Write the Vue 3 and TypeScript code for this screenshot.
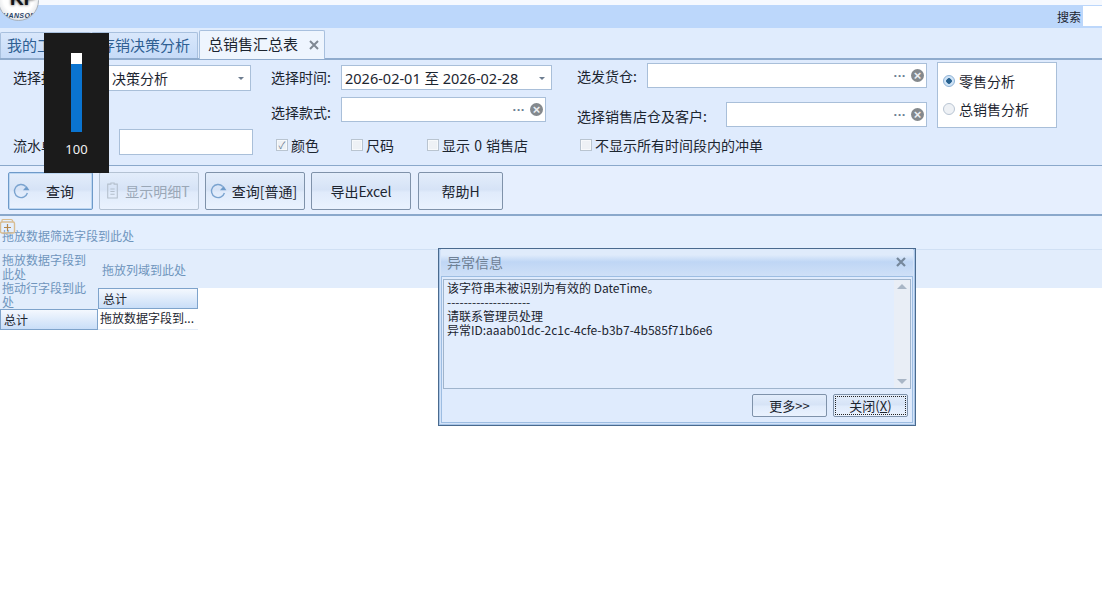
<script setup lang="ts">
const buttons = [
  { label: '查询', icon: 'refresh', cls: 'active wide' },
  { label: '显示明细T', icon: 'doc', cls: 'disabled wide' },
  { label: '查询[普通]', icon: 'refresh', cls: 'mid' },
  { label: '导出Excel', icon: '', cls: 'mid' },
  { label: '帮助H', icon: '', cls: 'small' },
]
</script>

<template>
  <div class="page">
    <div class="topgap"></div>
    <div class="searchbar">
      <span class="search-label">搜索</span>
      <span class="search-input"></span>
    </div>
    <div class="tabs">
      <div class="tab">我的工作台</div>
      <div class="tab second">存销决策分析</div>
      <div class="tab current">
        总销售汇总表
        <svg class="x-ic tab-x" viewBox="0 0 10 10"><path d="M1 1l8 8M9 1l-8 8" /></svg>
      </div>
    </div>

    <div class="form">
      <div class="col col-a">
        <div class="row r1">
          <span class="lbl lbl-a">选择报表:</span>
          <span class="box combo">决策分析<i class="caret"></i></span>
        </div>
        <div class="row r3">
          <span class="lbl lbl-b">流水单号:</span>
          <span class="box plain"></span>
        </div>
      </div>
      <div class="col col-b">
        <div class="row r1">
          <span class="lbl time-lbl">选择时间:</span>
          <span class="box date">2026-02-01 至 2026-02-28<i class="caret"></i></span>
        </div>
        <div class="row r2">
          <span class="lbl time-lbl low">选择款式:</span>
          <span class="box picker style-box"><span class="dots">···</span><i class="clear">×</i></span>
        </div>
        <div class="row r3 checks">
          <label class="chk c1"><i class="cb on">✓</i>颜色</label>
          <label class="chk c2"><i class="cb"></i>尺码</label>
          <label class="chk"><i class="cb"></i>显示 0 销售店</label>
        </div>
      </div>
      <div class="col col-c">
        <div class="row c-r1">
          <span class="lbl wh-lbl">选发货仓:</span>
          <span class="box picker wh-box"><span class="dots">···</span><i class="clear">×</i></span>
        </div>
        <div class="row c-r2">
          <span class="lbl cust-lbl">选择销售店仓及客户:</span>
          <span class="box picker cust-box"><span class="dots">···</span><i class="clear">×</i></span>
        </div>
        <div class="row c-r3">
          <label class="chk"><i class="cb"></i>不显示所有时间段内的冲单</label>
        </div>
      </div>
      <div class="radios">
        <label class="radio"><i class="dot on"></i>零售分析</label>
        <label class="radio"><i class="dot"></i>总销售分析</label>
      </div>
    </div>

    <div class="toolbar">
      <button v-for="b in buttons" :key="b.label" class="tbtn" :class="b.cls">
        <svg v-if="b.icon === 'refresh'" class="ic" viewBox="0 0 18 18" fill="none">
          <path d="M13.8 4.4A6.6 6.6 0 1 0 15.4 11" stroke="#7aa3cf" stroke-width="1.4" />
          <path d="M11 8.2h6.4L14.6 4z" fill="#6f9ccb" />
        </svg>
        <svg v-else-if="b.icon === 'doc'" class="ic doc" viewBox="0 0 14 16" fill="none" stroke="#b4bfcc">
          <path d="M2.5 2h3V1h3v1h3v13h-9z" />
          <path d="M5 6.5h4M5 9h4M5 11.5h4" />
        </svg>
        <span>{{ b.label }}</span>
      </button>
    </div>

    <div class="filter-zone">拖放数据筛选字段到此处</div>
    <div class="header-zone">
      <div class="hz-left">拖放数据字段到此处</div>
      <div class="hz-right">拖放列域到此处</div>
    </div>

    <div class="pivot">
      <div class="p-left">
        <div class="row-drop">拖动行字段到此处</div>
        <div class="cell-head">总计</div>
      </div>
      <div class="p-right">
        <div class="cell-head col-head">总计</div>
        <div class="cell-data">拖放数据字段到...</div>
      </div>
    </div>

    <!-- logo clipped by the top of the window -->
    <div class="logo">
      <span class="kp">KP</span>
      <span class="hanson">HANSON</span>
    </div>
    <svg class="expand" viewBox="0 0 16 17" fill="none">
      <path d="M0.5 5.5q0-1.500 1.500-1.500h11q1.500 0 1.500 1.500v8q0 1.500-1.500 1.500h-11q-1.500 0-1.500-1.500z" stroke="#d9bd92" stroke-width="1.400" />
      <path d="M2 4V2.500q0-1 1-1h8q1 0 1.500 1L13 4" stroke="#d9bd92" stroke-width="1.200" />
      <path d="M4 9.500h7M7.500 6v7" stroke="#b5874c" stroke-width="1.200" />
    </svg>

    <!-- system volume overlay -->
    <div class="volume">
      <div class="track"><div class="fill"></div></div>
      <div class="vol-num">100</div>
    </div>

    <!-- error dialog -->
    <div class="dialog">
      <div class="dlg-title">
        <span>异常信息</span>
        <svg class="x-ic dlg-x" viewBox="0 0 10 10"><path d="M1 1l8 8M9 1l-8 8" /></svg>
      </div>
      <div class="dlg-inner">
        <div class="memo">
          <div class="memo-text">
            <div>该字符串未被识别为有效的 DateTime。</div>
            <div>--------------------</div>
            <div>请联系管理员处理</div>
            <div>异常ID:aaab01dc-2c1c-4cfe-b3b7-4b585f71b6e6</div>
          </div>
          <div class="scroll"><i class="up"></i><i class="down"></i></div>
        </div>
        <div class="dlg-actions">
          <button class="dbtn">更多&gt;&gt;</button>
          <button class="dbtn focus"><span>关闭(<u>X</u>)</span></button>
        </div>
      </div>
    </div>
  </div>
</template>

<style>
html, body { margin: 0; background: #fff; overflow: hidden; }
</style>

<style scoped>
.page {
  position: relative;
  width: 1102px;
  height: 600px;
  overflow: hidden;
  background: #fff;
  font-family: "Noto Sans CJK SC", "Liberation Sans", sans-serif;
  font-size: 14px;
  color: #1c2530;
}
.topgap { height: 5px; background: #f6f9fe; }
.searchbar {
  height: 23px;
  background: #bcd7fb;
  display: flex;
  justify-content: flex-end;
  align-items: center;
  gap: 2px;
}
.search-label { font-size: 12px; line-height: 23px; }
.search-input { width: 19px; height: 20px; background: #fff; align-self: flex-start; margin-top: 1px; }

.tabs {
  height: 30px;
  background: #e0ecfd;
  border-bottom: 2px solid #8fabcd;
  display: flex;
  align-items: flex-end;
}
.tab {
  height: 26px;
  line-height: 24px;
  box-sizing: border-box;
  border: 1px solid #a8c0de;
  border-bottom: 0;
  border-radius: 2px 2px 0 0;
  background: linear-gradient(#d9e7fb, #c6dbf8);
  color: #2f5f93;
  font-size: 15px;
  width: 91px;
  padding-left: 6px;
  white-space: nowrap;
}
.tab.second { width: 107px; padding-left: 8px; }
.tab.current {
  width: 126px;
  height: 29px;
  line-height: 26px;
  margin-left: 1px;
  background: #eef5fe;
  color: #1c2530;
  padding-left: 8px;
  display: flex;
  margin-bottom: -1px;
}
.x-ic { fill: none; stroke: #7f8893; stroke-width: 2; flex: none; }
.tab-x { width: 10px; height: 10px; margin: 9px 0 0 11px; }

.form {
  height: 105px;
  background: #dfebfd;
  border-bottom: 1px solid #8aa8cb;
  display: flex;
}
.col { display: flex; flex-direction: column; }
.col-a { padding-left: 13px; box-sizing: border-box; width: 271px; }
.col-b { width: 306px; }
.col-c { width: 360px; }
.row { display: flex; align-items: center; }
.col-a .r1 { height: 26px; margin-top: 5px; }
.col-a .r3 { height: 26px; margin-top: 38px; }
.col-b .r1 { height: 25px; margin-top: 5px; }
.col-b .r2 { height: 25px; margin-top: 7px; }
.col-b .r3 { height: 26px; margin-top: 10px; }
.lbl { white-space: nowrap; }
.lbl-a { width: 94px; margin-top: -2px; }
.lbl-b { width: 106px; margin-top: 6px; }
.time-lbl { width: 70px; margin-top: -2px; }
.time-lbl.low { margin-top: 4px; }
.box {
  display: flex;
  align-items: center;
  position: relative;
  box-sizing: border-box;
  background: #fff;
  border: 1px solid #a9bfd9;
  height: 100%;
}
.combo { width: 144px; padding-left: 4px; }
.plain { width: 134px; }
.date { width: 211px; padding-left: 3px; font-size: 14.5px; font-family: "Noto Sans", "Noto Sans CJK SC", sans-serif; }
.style-box { width: 205px; }
.caret {
  position: absolute;
  right: 6px;
  top: 11px;
  border: 3px solid transparent;
  border-top: 3px solid #6d7d90;
  border-bottom: 0;
}
.picker { justify-content: flex-end; padding-right: 2px; }
.dots {
  color: #6d7f94;
  font-family: "Liberation Sans", sans-serif;
  font-weight: 700;
  font-size: 13px;
  letter-spacing: -.2px;
  margin-right: 5px;
  line-height: 16px;
}
.clear {
  width: 13px;
  height: 13px;
  border-radius: 50%;
  background: #84898d;
  color: #eceff2;
  font-style: normal;
  font-size: 13px;
  line-height: 13px;
  text-align: center;
  font-family: "Liberation Sans", sans-serif;
  font-weight: 700;
}
.checks { padding-left: 5px; }
.chk { display: flex; align-items: center; white-space: nowrap; }
.c1 { width: 75px; }
.c2 { width: 76px; }
.chk:last-child { word-spacing: 1px; }
.cb {
  width: 12px;
  height: 12px;
  box-sizing: border-box;
  border: 1px solid #b9c4d0;
  background: #eef1f5;
  box-shadow: inset 0 0 0 1px #f7f9fb;
  margin-right: 3px;
  font-style: normal;
  font-size: 10px;
  line-height: 10px;
  text-align: center;
  color: #687b92;
  flex: none;
}
.c-r1 { height: 25px; margin-top: 3px; }
.c-r2 { height: 25px; margin-top: 14px; }
.c-r3 { height: 26px; margin-top: 5px; padding-left: 3px; }
.wh-lbl { width: 70px; }
.wh-box { width: 280px; }
.cust-lbl { width: 149px; margin-top: 3px; }
.cust-box { width: 201px; }
.radios {
  width: 120px;
  height: 66px;
  box-sizing: border-box;
  background: #fff;
  border: 1px solid #a9bfd9;
  margin-top: 2px;
  padding-top: 6px;
  display: flex;
  flex-direction: column;
  gap: 4px;
}
.radio { display: flex; align-items: center; padding-left: 5px; height: 24px; white-space: nowrap; }
.dot {
  width: 12px;
  height: 12px;
  border-radius: 50%;
  box-sizing: border-box;
  border: 1px solid #b9c5d3;
  background: #eef1f5;
  margin-right: 4px;
}
.dot.on { background: radial-gradient(circle, #27618f 0 2.5px, #cfe3f6 3px); border-color: #8eb2d6; }

.toolbar {
  height: 50px;
  box-sizing: border-box;
  background: #e6effe;
  border-bottom: 2px solid #8aa8cb;
  display: flex;
  align-items: flex-start;
  padding: 6px 0 0 8px;
  gap: 6px;
}
.tbtn {
  height: 38px;
  box-sizing: border-box;
  border: 1px solid #7f92aa;
  border-radius: 2px;
  background: linear-gradient(#e3edfb 0%, #d6e3f6 46%, #e0ebfb 54%, #eaf2fe 100%);
  font-family: inherit;
  font-size: 14px;
  color: #1c2530;
  display: flex;
  align-items: center;
  justify-content: center;
  padding: 0;
  position: relative;
}
.wide { width: 85px; }
.wide.disabled { width: 100px; color: #9aa7b6; border-color: #b4c2d3; }
.wide.active { border-color: #6e9ac9; box-shadow: inset 0 0 0 1px #bcd6f2; }
.mid { width: 100px; }
.small { width: 85px; margin-left: 1px; }
.ic { position: absolute; left: 3px; top: 9px; width: 18px; height: 18px; }
.ic.doc { left: 5px; width: 15px; height: 17px; }
.active span { margin-left: 19px; }
.disabled span { margin-left: 17px; }
.mid:nth-child(3) span { margin-left: 19px; }

.filter-zone {
  height: 34px;
  box-sizing: border-box;
  background: #e4effe;
  border-bottom: 1px solid #d0e0f4;
  color: #6f95bd;
  font-size: 12px;
  line-height: 40px;
  padding-left: 2px;
}
.header-zone {
  height: 38px;
  background: #e2edfc;
  display: flex;
  color: #6f95bd;
  font-size: 12px;
}
.hz-left { width: 88px; padding-left: 2px; line-height: 14px; padding-top: 3px; box-sizing: border-box; }
.hz-right { padding-left: 14px; line-height: 40px; }

.pivot { display: flex; margin-top: -7px; position: relative; }
.p-left { width: 98px; }
.row-drop {
  height: 28px;
  padding-left: 2px;
  padding-right: 12px;
  font-size: 12px;
  line-height: 14px;
  color: #6f95bd;
  background: #e2edfc;
}
.cell-head {
  height: 21px;
  box-sizing: border-box;
  border: 1px solid #7ea3cb;
  background: linear-gradient(#f4f8fe, #c9def8);
  font-size: 12px;
  line-height: 19px;
  padding-left: 4px;
  color: #1c2530;
}
.p-left .cell-head { padding-left: 3px; }
.p-right { width: 100px; margin-top: 7px; }
.cell-data {
  font-size: 12px;
  height: 20px;
  line-height: 18px;
  padding-left: 2px;
  white-space: nowrap;
  overflow: hidden;
  border-bottom: 1px solid #e4edf8;
}

.logo {
  position: absolute;
  left: -2px;
  top: -20px;
  width: 39px;
  height: 39px;
  border-radius: 50%;
  background: radial-gradient(circle at 50% 45%, #fff 0 52%, #c4c9d0 100%);
  border: 1px solid #aab2bb;
  overflow: hidden;
}
.kp {
  position: absolute;
  left: 11px;
  top: 9px;
  font: 700 19px/18px "Liberation Sans", sans-serif;
  color: #111316;
  text-shadow: 0 0 3px #333;
}
.hanson {
  position: absolute;
  left: 4px;
  top: 31px;
  font: italic 700 7px/8px "Liberation Sans", sans-serif;
  letter-spacing: .4px;
  color: #2a4468;
  white-space: nowrap;
}
.expand { position: absolute; left: 0; top: 218px; width: 16px; height: 17px; }

.volume {
  position: absolute;
  left: 44px;
  top: 33px;
  width: 65px;
  height: 140px;
  background: #1b1b1b;
  color: #f2f2f2;
  display: flex;
  flex-direction: column;
  align-items: center;
  font-family: "Noto Sans", sans-serif;
  font-size: 13px;
}
.track { width: 11px; height: 79px; margin-top: 20px; background: #fff; position: relative; }
.fill { position: absolute; left: 0; right: 0; bottom: 0; height: 68px; background: #0a74d0; }
.vol-num { margin-top: 8px; line-height: 18px; }

.dialog {
  position: absolute;
  left: 438px;
  top: 248px;
  width: 478px;
  height: 178px;
  box-sizing: border-box;
  border: 1px solid #4a6a8e;
  background: #d4e3f8;
  padding: 0 2px 2px;
  display: flex;
  flex-direction: column;
  box-shadow: inset 0 0 0 1px #a7c5e8;
}
.dlg-title {
  height: 27px;
  flex: none;
  display: flex;
  justify-content: space-between;
  align-items: center;
  padding: 0 7px 2px 6px;
  box-sizing: border-box;
  color: #6f8195;
  background: linear-gradient(#dfebfb 0, #dfebfb 22%, #bfd6f5 48%, #cfe0f7 100%);
}
.dlg-x { width: 10px; height: 10px; stroke: #75879b; stroke-width: 2.2; }
.dlg-inner {
  flex: 1;
  box-sizing: border-box;
  border: 1px solid #9dbde2;
  background: #dfebfd;
  padding: 2px 1px 0 1px;
  display: flex;
  flex-direction: column;
}
.memo {
  height: 110px;
  box-sizing: border-box;
  border: 1px solid #9fb4cc;
  display: flex;
  background: #e2edfd;
}
.memo-text {
  flex: 1;
  font-size: 12px;
  line-height: 14px;
  padding: 1px 0 0 3px;
}
.scroll { width: 16px; background: #e9eef6; position: relative; }
.up, .down { position: absolute; left: 3px; border: 5px solid transparent; }
.up { top: 4px; border-top: 0; border-bottom: 5px solid #a9b6c6; }
.down { bottom: 4px; border-bottom: 0; border-top: 5px solid #a9b6c6; }
.dlg-actions {
  flex: 1;
  display: flex;
  justify-content: flex-end;
  align-items: center;
  gap: 6px;
  padding-right: 3px;
}
.dbtn {
  width: 75px;
  height: 23px;
  box-sizing: border-box;
  border: 1px solid #7f92aa;
  border-radius: 2px;
  background: linear-gradient(#e3edfb 0%, #d6e3f6 46%, #e0ebfb 54%, #eaf2fe 100%);
  font-family: inherit;
  font-size: 13px;
  color: #1c2530;
  padding: 0;
}
.dbtn.focus { padding: 1px; }
.dbtn.focus span {
  display: block;
  height: 19px;
  line-height: 17px;
  box-sizing: border-box;
  border: 1px dotted #222;
}
</style>
